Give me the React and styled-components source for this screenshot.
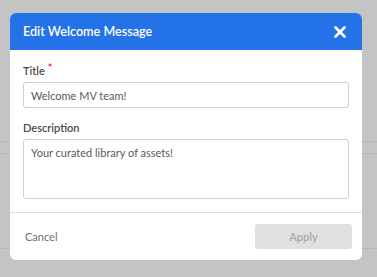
import React from "react";
import styled, { createGlobalStyle } from "styled-components";

const Global = createGlobalStyle`
  html, body { margin: 0; padding: 0; }
  body {
    width: 377px; height: 277px; overflow: hidden;
    background: #c4c4c4;
    font-family: "Lato", "Open Sans", sans-serif;
  }
`;

const Page = styled.div`
  position: relative;
  display: flow-root;
  width: 377px;
  height: 277px;
  box-sizing: border-box;
  padding-top: 141px;
  background: #c4c4c4;
`;

const BackBand = styled.div`
  height: 11px;
  border-top: 1px solid #b6b6b6;
  border-bottom: 1px solid #b6b6b6;
`;

const BackRule = styled.div`
  margin-top: 94px;
  border-top: 1px solid #b6b6b6;
`;

const Overlay = styled.div`
  position: absolute;
  inset: 0;
  display: flex;
  justify-content: flex-start;
  align-items: flex-start;
  padding-top: 13px;
  padding-left: 10px;
`;

const Modal = styled.div`
  width: 352px;
  height: 247px;
  background: #fff;
  border-radius: 6px;
  overflow: hidden;
  display: flex;
  flex-direction: column;
`;

const Header = styled.div`
  height: 37px;
  flex: none;
  background: #2372e8;
  display: flex;
  align-items: center;
  justify-content: space-between;
  padding: 0 16px 0 13px;
`;

const HeaderTitle = styled.h2`
  margin: 0;
  color: #fff;
  font-size: 12.6px;
  font-weight: 600;
  letter-spacing: 0;
`;

const CloseBtn = styled.button`
  border: 0;
  background: none;
  padding: 0;
  display: flex;
  cursor: pointer;
`;

const Body = styled.div`
  padding: 14px 13px 13px 13px;
  display: flex;
  flex-direction: column;
`;

const Label = styled.label`
  font-size: 11px;
  font-weight: 600;
  color: #4a4a4a;
  line-height: 13px;
  margin-bottom: 5px;
  display: block;
`;

const Req = styled.span`
  color: #e0281f;
  margin-left: 3px;
  position: relative;
  top: -3px;
`;

const Field = styled.div`
  width: 326px;
  height: ${(p) => p.$h}px;
  box-sizing: border-box;
  border: 1px solid #cfcfcf;
  border-radius: 3px;
  padding: ${(p) => p.$pad};
  font-size: 11px;
  line-height: 13px;
  color: #5a5a5a;
  margin-bottom: ${(p) => p.$mb}px;
`;

const Divider = styled.div`
  border-top: 1px solid #dedede;
`;

const Footer = styled.div`
  flex: 1;
  display: flex;
  align-items: center;
  justify-content: space-between;
  padding: 0 10px 0 15px;
`;

const Cancel = styled.button`
  border: 0;
  background: none;
  padding: 0;
  font-family: inherit;
  font-size: 11px;
  color: #6f6f6f;
`;

const Apply = styled.button`
  width: 97px;
  height: 25px;
  border: 0;
  border-radius: 3px;
  background: #e0e0e0;
  color: #a8a8a8;
  font-family: inherit;
  font-size: 11px;
  font-weight: 600;
`;

export default function App() {
  return (
    <>
      <Global />
      <Page>
        <BackBand />
        <BackRule />
        <Overlay>
          <Modal>
            <Header>
              <HeaderTitle>Edit Welcome Message</HeaderTitle>
              <CloseBtn aria-label="Close">
                <svg width="12" height="12" viewBox="0 0 12 12">
                  <path d="M1.5 1.5 L10.5 10.5 M10.5 1.5 L1.5 10.5" stroke="#fff" strokeWidth="2.6" strokeLinecap="round" />
                </svg>
              </CloseBtn>
            </Header>
            <Body>
              <Label>Title<Req>*</Req></Label>
              <Field $h={26} $pad="6px 7px" $mb={13}>Welcome MV team!</Field>
              <Label>Description</Label>
              <Field $h={60} $pad="6px 7px" $mb={0}>Your curated library of assets!</Field>
            </Body>
            <Divider />
            <Footer>
              <Cancel>Cancel</Cancel>
              <Apply disabled>Apply</Apply>
            </Footer>
          </Modal>
        </Overlay>
      </Page>
    </>
  );
}
